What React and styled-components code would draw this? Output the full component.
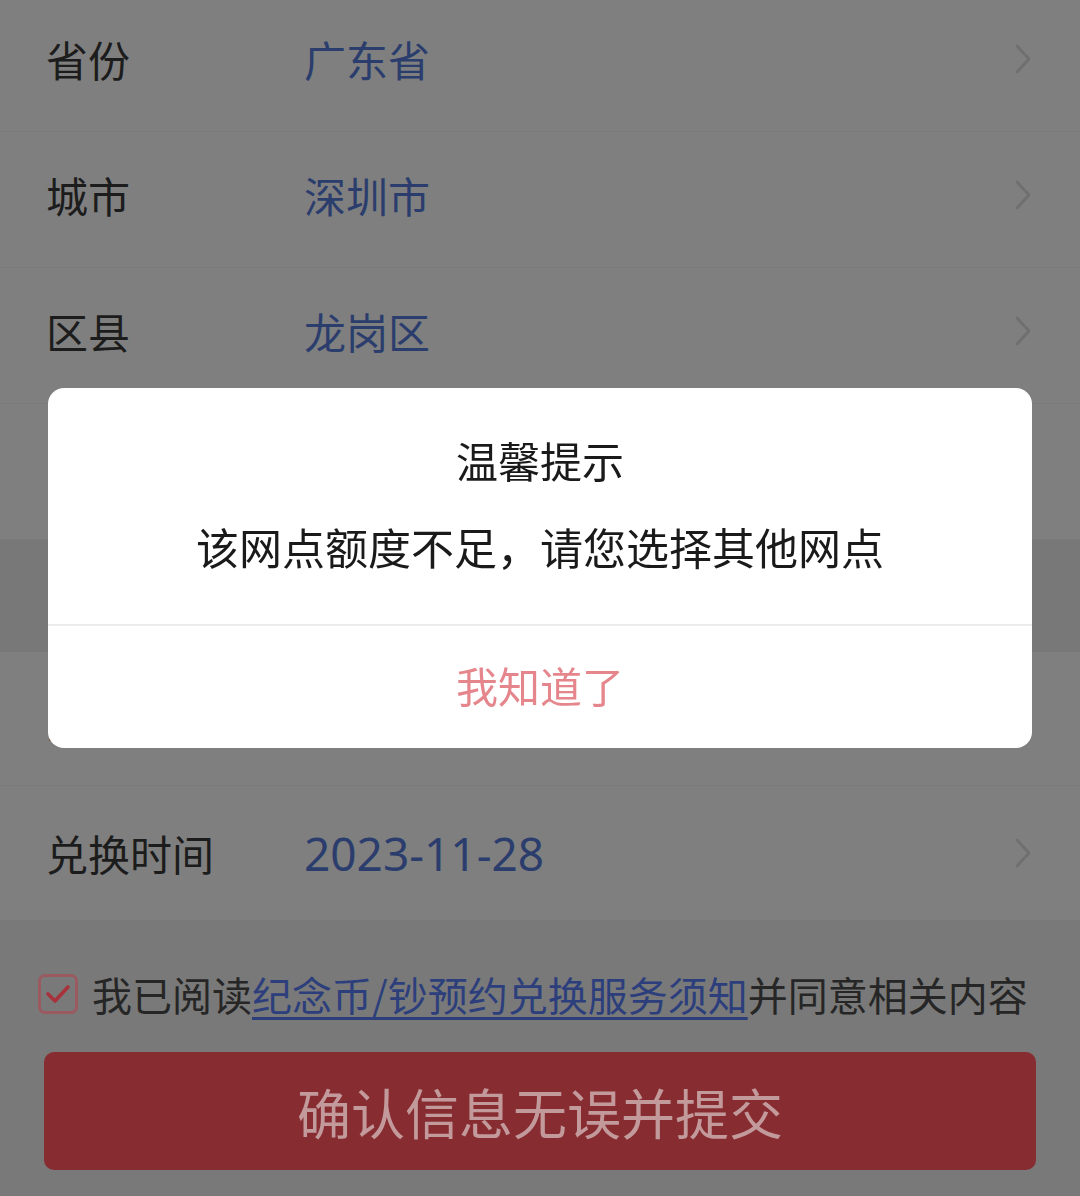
import React from "react";
import styled, { createGlobalStyle } from "styled-components";

const Global = createGlobalStyle`
  html, body { margin: 0; padding: 0; }
  body {
    background: #797979;
    font-family: "Noto Sans CJK SC", "Noto Sans", sans-serif;
    overflow: hidden;
  }
`;

const Page = styled.div`
  width: 1080px;
  height: 1196px;
  background: #797979;
  overflow: hidden;
`;

const List = styled.div`
  display: flex;
  flex-direction: column;
  margin-top: -4px;
`;

const Row = styled.div`
  display: flex;
  align-items: center;
  height: ${(p) => p.$h || 136}px;
  box-sizing: border-box;
  padding: 0 48px ${(p) => (p.$lift ? 10 : 0)}px 46px;
  background: ${(p) => (p.$band ? "#787878" : "#7f7f7f")};
  border-bottom: 1px solid ${(p) => (p.$noLine ? "transparent" : "#7b7b7b")};
`;

const Label = styled.div`
  width: 258px;
  font-size: 42px;
  line-height: 1;
  color: #1c1c1c;
`;

const Value = styled.div`
  flex: 1;
  line-height: 1;
  color: #2b3d6d;
  font-family: ${(p) => (p.$num ? '"Noto Sans", "Noto Sans CJK SC", sans-serif' : "inherit")};
  font-size: ${(p) => (p.$num ? 46 : 42)}px;
`;

const Chevron = () => (
  <svg width="18" height="32" viewBox="0 0 18 32" fill="none">
    <path d="M3 3 L15 16 L3 29" stroke="#6f6f6f" strokeWidth="2.6" strokeLinecap="round" strokeLinejoin="round" />
  </svg>
);

const Footer = styled.div`
  display: flex;
  flex-direction: column;
  padding: 46px 44px 0 38px;
`;

const Agree = styled.div`
  display: flex;
  align-items: center;
  height: 56px;
  font-size: 40px;
  color: #262626;
  white-space: nowrap;
`;

const Box = styled.span`
  display: inline-flex;
  align-items: center;
  justify-content: center;
  width: 34px;
  height: 34px;
  border: 3px solid #9a5a60;
  border-radius: 7px;
  margin-right: 14px;
  flex-shrink: 0;
`;

const Link = styled.span`
  color: #2c3f7c;
  text-decoration: underline;
  text-decoration-thickness: 3px;
  text-underline-offset: 6px;
`;

const Submit = styled.button`
  margin-top: 30px;
  margin-left: 6px;
  width: 992px;
  height: 118px;
  border: none;
  border-radius: 10px;
  background: #872c31;
  color: #c39a9b;
  font-family: inherit;
  font-size: 54px;
  display: flex;
  align-items: center;
  justify-content: center;
  padding: 0;
`;

const Mask = styled.div`
  position: fixed;
  inset: 0;
  display: flex;
  justify-content: center;
  align-items: flex-start;
  padding-top: 388px;
`;

const Dialog = styled.div`
  width: 984px;
  height: 360px;
  background: #ffffff;
  border-radius: 16px;
  display: flex;
  flex-direction: column;
  overflow: hidden;
`;

const DialogBody = styled.div`
  flex: 1;
  display: flex;
  flex-direction: column;
  align-items: center;
  padding-top: 42px;
  gap: 26px;
  border-bottom: 2px solid #ebebeb;
`;

const Title = styled.div`
  font-size: 42px;
  line-height: 60px;
  color: #1a1a1a;
`;

const Message = styled.div`
  font-size: 43px;
  line-height: 60px;
  color: #1a1a1a;
`;

const DialogAction = styled.div`
  height: 122px;
  display: flex;
  align-items: center;
  justify-content: center;
  font-size: 42px;
  color: #e5868c;
  padding-bottom: 6px;
  box-sizing: border-box;
`;

const rows = [
  { label: "省份", value: "广东省" },
  { label: "城市", value: "深圳市" },
  { label: "区县", value: "龙岗区" },
];

export default function App() {
  return (
    <Page>
      <Global />
      <List>
        {rows.map((r) => (
          <Row key={r.label} $lift>
            <Label>{r.label}</Label>
            <Value>{r.value}</Value>
            <Chevron />
          </Row>
        ))}
        <Row>
          <Label />
          <Value />
        </Row>
        <Row $h={112} $band $noLine>
          <Label>兑换网点</Label>
          <Value />
        </Row>
        <Row $h={134}>
          <Label>网点地址</Label>
          <Value />
        </Row>
        <Row $h={134} $noLine>
          <Label>兑换时间</Label>
          <Value $num>2023-11-28</Value>
          <Chevron />
        </Row>
      </List>
      <Footer>
        <Agree>
          <Box>
            <svg width="26" height="22" viewBox="0 0 26 22" fill="none">
              <path d="M3 11 L10 18 L23 4" stroke="#a8323b" strokeWidth="3.6" strokeLinecap="round" strokeLinejoin="round" />
            </svg>
          </Box>
          我已阅读<Link>纪念币/钞预约兑换服务须知</Link>并同意相关内容
        </Agree>
        <Submit>确认信息无误并提交</Submit>
      </Footer>
      <Mask>
        <Dialog>
          <DialogBody>
            <Title>温馨提示</Title>
            <Message>该网点额度不足，请您选择其他网点</Message>
          </DialogBody>
          <DialogAction>我知道了</DialogAction>
        </Dialog>
      </Mask>
    </Page>
  );
}
